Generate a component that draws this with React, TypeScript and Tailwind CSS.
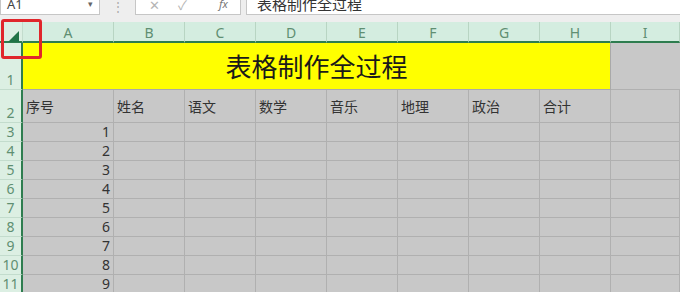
const cols = ["A", "B", "C", "D", "E", "F", "G", "H", "I"];
const headers = ["序号", "姓名", "语文", "数学", "音乐", "地理", "政治", "合计", ""];
const nums = [1, 2, 3, 4, 5, 6, 7, 8, 9];

const font = { fontFamily: '"Noto Sans", "Noto Sans CJK SC", sans-serif' };

function RowHead({ n }: { n: number }) {
  return (
    <div className="flex items-end justify-center border-r-2 border-r-[#2e7d4f] border-b border-b-[#c3dccd] bg-[#dcefe3] text-[14px] leading-[18px] text-[#5f8f72]">
      {n}
    </div>
  );
}

export default function App() {
  return (
    <div className="relative h-[292px] w-[680px] overflow-hidden bg-[#c8c8c8]" style={font}>
      {/* formula bar */}
      <div className="flex h-[22px] items-start bg-[#eeeeee]">
        <div className="relative h-[15px] w-[100px] border border-t-0 border-[#c6c6c6] bg-white">
          <span className="absolute -top-[5px] left-[6px] text-[13px] text-[#444]">A1</span>
          <span className="absolute -top-[3px] right-[6px] text-[9px] text-[#666]">▾</span>
        </div>
        <div className="ml-[12px] mt-[-2px] text-[12px] text-[#aaa]">⋮</div>
        <div className="relative ml-[11px] h-[15px] w-[106px] border border-t-0 border-[#c6c6c6] bg-white text-[#b5b5b5]">
          <span className="absolute -top-[4px] left-[13px] text-[13px]">✕</span>
          <span className="absolute -top-[4px] left-[42px] text-[13px]">✓</span>
          <span className="absolute -top-[4px] left-[83px] text-[11px] italic text-[#777]">fx</span>
        </div>
        <div className="relative ml-[5px] h-[15px] flex-1 border border-t-0 border-r-0 border-[#c6c6c6] bg-white">
          <span
            className="absolute -top-[7px] left-[10px] text-[15px] text-[#333]"
            style={{ fontFamily: '"Noto Sans CJK SC", sans-serif' }}
          >
            表格制作全过程
          </span>
        </div>
      </div>

      {/* sheet */}
      <div className="grid grid-cols-[23px_91px_repeat(7,71px)_1fr] grid-rows-[21px_47px_33px_repeat(9,19px)]">
        {/* corner */}
        <div className="relative border-r border-b-2 border-r-[#c3dccd] border-b-[#2e7d4f] bg-[#dcefe3]">
          <svg className="absolute left-[8px] top-[9px]" width="11" height="11" viewBox="0 0 11 11">
            <polygon points="11,0 11,11 0,11" fill="#217346" />
          </svg>
        </div>
        {cols.map((c) => (
          <div
            key={c}
            className="flex items-end justify-center border-r border-b-2 border-r-[#b8d5c3] border-b-[#2e7d4f] bg-[#d4ede0] text-[14px] leading-[17px] text-[#5f8f72]"
          >
            {c}
          </div>
        ))}

        {/* row 1 */}
        <RowHead n={1} />
        <div
          className="col-span-8 flex items-center justify-center border-r border-b border-[#a9a9a9] bg-[#ffff00] pb-[2px] text-[26px] text-[#1a1a1a]"
          style={{ fontFamily: '"Noto Sans CJK SC", sans-serif' }}
        >
          表格制作全过程
        </div>
        <div className="border-b border-[#b0b0b0]" />

        {/* row 2 */}
        <RowHead n={2} />
        {headers.map((h, i) => (
          <div
            key={i}
            className="flex items-center border-r border-b border-[#b0b0b0] pl-[3px] text-[14px] text-[#333]"
            style={{ fontFamily: '"Noto Sans CJK SC", sans-serif' }}
          >
            {h}
          </div>
        ))}

        {/* data rows */}
        {nums.map((n) => (
          <div key={n} className="contents">
            <RowHead n={n + 2} />
            <div className="flex items-center justify-end border-r border-b border-[#b0b0b0] pr-[3px] text-[14px] leading-[18px] text-[#333]">
              {n}
            </div>
            {cols.slice(1).map((c) => (
              <div key={c} className="border-r border-b border-[#b0b0b0]" />
            ))}
          </div>
        ))}
      </div>

      {/* highlight box */}
      <div className="absolute left-[1px] top-[19px] h-[40px] w-[41px] rounded-[3px] border-[3px] border-[#e0262b]" />
    </div>
  );
}
